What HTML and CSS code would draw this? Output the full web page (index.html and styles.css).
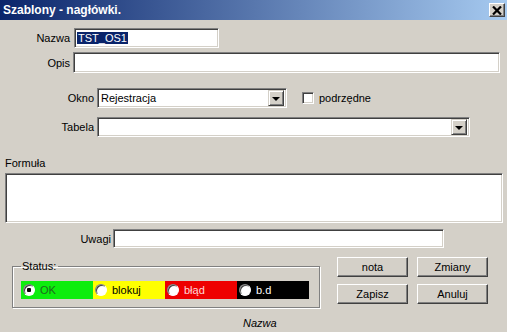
FILE: index.html
```html
<!DOCTYPE html>
<html lang="pl">
  <head>
    <meta charset="UTF-8" />
    <meta name="viewport" content="width=device-width, initial-scale=1.0" />
    <title>Szablony - nagłówki.</title>
    <link rel="stylesheet" href="styles.css">
  </head>
  <body>
    <div class="window">
      <div class="titlebar">
        <span class="title">Szablony - nagłówki.</span>
        <span class="close">
          <svg width="10" height="9" viewBox="0 0 10 9">
            <path d="M1 0.5 L9 8.5 M9 0.5 L1 8.5" stroke="#000" stroke-width="2.2" />
          </svg>
        </span>
      </div>

      <div class="row row-nazwa">
        <label class="label w70">Nazwa</label>
        <div class="field nazwa"><span class="selected">TST_OS1</span></div>
      </div>

      <div class="row row-opis">
        <label class="label w70">Opis</label>
        <div class="field opis"></div>
      </div>

      <div class="row row-okno">
        <label class="label w94">Okno</label>
        <div class="field combo okno">
          <span class="combo-text">Rejestracja</span>
          <span class="combo-btn"><span class="arrow"></span></span>
        </div>
        <span class="checkbox"></span>
        <span class="check-label">podrzędne</span>
      </div>

      <div class="row row-tabela">
        <label class="label w94">Tabela</label>
        <div class="field combo tabela">
          <span class="combo-text"></span>
          <span class="combo-btn"><span class="arrow"></span></span>
        </div>
      </div>

      <div class="formula-label">Formuła</div>
      <div class="field formula"></div>

      <div class="row row-uwagi">
        <label class="label w111">Uwagi</label>
        <div class="field uwagi"></div>
      </div>

      <div class="bottom">
        <fieldset class="status">
          <legend>Status:</legend>
          <div class="strips">
            <div class="strip ok"><span class="radio checked"></span>OK</div>
            <div class="strip blokuj"><span class="radio"></span>blokuj</div>
            <div class="strip blad"><span class="radio"></span>błąd</div>
            <div class="strip bd"><span class="radio"></span>b.d</div>
          </div>
        </fieldset>
        <div class="buttons">
          <button class="btn">nota</button>
          <button class="btn">Zmiany</button>
          <button class="btn">Zapisz</button>
          <button class="btn">Anuluj</button>
        </div>
      </div>

      <div class="footer">Nazwa</div>
    </div>
  </body>
</html>
```

FILE: styles.css
```css
* {
  box-sizing: border-box;
  font-family: "Liberation Sans", Arial, sans-serif;
  font-size: 11px;
}
body {
  margin: 0;
  background: #d4d0c8;
}
.window {
  width: 507px;
  height: 332px;
  overflow: hidden;
  background: #d4d0c8;
}
.titlebar {
  height: 20px;
  display: flex;
  align-items: center;
  justify-content: space-between;
  padding: 0 2px 0 3px;
  background: linear-gradient(to right, #0a246a, #a6caf0);
}
.title {
  color: #fff;
  font-weight: bold;
  font-size: 12px;
}
.close {
  width: 16px;
  height: 14px;
  display: flex;
  align-items: center;
  justify-content: center;
  background: #d4d0c8;
  border: 1px solid;
  border-color: #fff #404040 #404040 #fff;
  box-shadow: inset -1px -1px #808080;
}
.row {
  display: flex;
  align-items: center;
}
.label {
  text-align: right;
  color: #000;
}
.w70 {
  width: 70px;
}
.w94 {
  width: 94px;
}
.w111 {
  width: 111px;
}
.field {
  background: #fff;
  border: 1px solid;
  border-color: #808080 #fff #fff #808080;
  box-shadow: inset 1px 1px #404040, inset -1px -1px #d4d0c8;
}
.row-nazwa {
  margin-top: 8px;
  height: 20px;
}
.nazwa {
  margin-left: 4px;
  width: 145px;
  height: 20px;
  padding: 3px 2px;
  line-height: 13px;
}
.selected {
  background: #0a246a;
  color: #fff;
  padding: 0 1px;
}
.row-opis {
  margin-top: 4px;
  height: 21px;
}
.opis {
  margin-left: 3px;
  width: 427px;
  height: 21px;
}
.row-okno {
  margin-top: 15px;
  height: 20px;
}
.combo {
  display: flex;
  align-items: center;
  height: 20px;
  padding: 2px;
  margin-left: 3px;
}
.combo-text {
  flex: 1;
  padding-left: 1px;
}
.combo-btn {
  width: 16px;
  height: 16px;
  display: flex;
  align-items: center;
  justify-content: center;
  background: #d4d0c8;
  border: 1px solid;
  border-color: #d4d0c8 #404040 #404040 #d4d0c8;
  box-shadow: inset 1px 1px #fff, inset -1px -1px #808080;
}
.arrow {
  width: 0;
  height: 0;
  border-left: 4px solid transparent;
  border-right: 4px solid transparent;
  border-top: 4px solid #000;
  margin-top: 1px;
}
.okno {
  width: 190px;
}
.checkbox {
  width: 12px;
  height: 12px;
  margin-left: 15px;
  background: #fff;
  border: 1px solid;
  border-color: #808080 #fff #fff #808080;
  box-shadow: inset 1px 1px #404040, inset -1px -1px #d4d0c8;
}
.check-label {
  margin-left: 5px;
}
.row-tabela {
  margin-top: 9px;
  height: 20px;
}
.tabela {
  width: 373px;
}
.formula-label {
  margin-top: 19px;
  height: 14px;
  padding-left: 5px;
  line-height: 14px;
}
.formula {
  margin: 3px 0 0 5px;
  width: 498px;
  height: 50px;
}
.row-uwagi {
  margin-top: 6px;
  height: 19px;
}
.uwagi {
  margin-left: 2px;
  width: 331px;
  height: 19px;
}
.bottom {
  display: flex;
  align-items: flex-start;
  margin-top: 9px;
}
.status {
  margin: 3px 0 0 12px;
  width: 308px;
  padding: 0 10px 8px 8px;
  border: 1px solid #808080;
  box-shadow: inset 1px 1px #fff, 1px 1px #fff;
}
.status legend {
  padding: 0 2px 0 1px;
  line-height: 13px;
}
.strips {
  display: flex;
  margin-top: 8px;
}
.strip {
  width: 72px;
  height: 18px;
  display: flex;
  align-items: center;
  padding-left: 2px;
}
.radio {
  width: 12px;
  height: 12px;
  margin-right: 5px;
  border-radius: 50%;
  background: #fff;
  border: 1px solid;
  border-color: #808080 #fff #fff #808080;
  box-shadow: inset 1px 1px #404040;
}
.radio.checked {
  background: radial-gradient(circle, #000 2px, #fff 2.5px);
}
.ok {
  background: #0ded0d;
  color: #1e6a1e;
}
.blokuj {
  background: #ffff00;
  color: #000;
}
.blad {
  background: #ee0000;
  color: #ffd8d8;
}
.bd {
  background: #000;
  color: #fff;
}
.buttons {
  display: grid;
  grid-template-columns: 71px 71px;
  column-gap: 9px;
  row-gap: 7px;
  margin-left: 17px;
}
.btn {
  height: 20px;
  padding: 0;
  background: #d4d0c8;
  color: #000;
  border: 1px solid;
  border-color: #fff #404040 #404040 #fff;
  box-shadow: inset -1px -1px #808080, inset 1px 1px #d4d0c8;
}
.footer {
  margin-top: 9px;
  padding-left: 243px;
  font-style: italic;
}
```
